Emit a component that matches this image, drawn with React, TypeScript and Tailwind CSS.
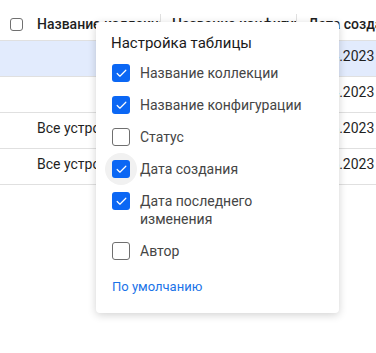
import { Check } from 'lucide-react'

type Row = {
  name: string
  config: string
  created: string
  selected?: boolean
}

const rows: Row[] = [
  { name: '', config: 'Основная', created: '12.04.2023 / 10:15', selected: true },
  { name: '', config: 'Тестовая', created: '18.04.2023 / 16:40' },
  { name: 'Все устройства', config: 'Основная', created: '21.05.2023 / 09:03' },
  { name: 'Все устройства', config: 'Резервная', created: '30.05.2023 / 11:27' },
]

const columns = [
  { label: 'Название коллекции', checked: true },
  { label: 'Название конфигурации', checked: true },
  { label: 'Статус', checked: false },
  { label: 'Дата создания', checked: true, hover: true },
  { label: 'Дата последнего изменения', checked: true },
  { label: 'Автор', checked: false },
]

function Box({ checked, hover }: { checked: boolean; hover?: boolean }) {
  return (
    <span className="relative flex h-[18px] w-[18px] shrink-0 items-center justify-center">
      {hover && <span className="absolute -left-[7px] -top-[7px] h-8 w-8 rounded-full bg-[#f1f1f1]" />}
      {checked ? (
        <span className="relative flex h-[18px] w-[18px] items-center justify-center rounded-[3px] bg-[#0b67f4]">
          <Check size={13} strokeWidth={2.2} className="text-white" />
        </span>
      ) : (
        <span className="relative h-[18px] w-[18px] rounded-[3px] border-[1.5px] border-[#6f6f6f] bg-white" />
      )}
    </span>
  )
}

export default function App() {
  return (
    <div className="relative h-[353px] w-[376px] overflow-hidden bg-white font-['Roboto',sans-serif] text-[14px] text-[#1f1f1f]">
      <div className="w-[520px]">
        <div className="flex h-[41px] items-center border-b border-[#e0e0e0] pt-[8px]">
          <div className="flex w-[160px] items-center overflow-hidden">
            <span className="ml-[10px] h-[13px] w-[13px] shrink-0 rounded-[3px] border border-[#707070]" />
            <span className="ml-[14px] whitespace-nowrap font-medium">Название коллекции</span>
          </div>
          <div className="h-[20px] w-px bg-[#e0e0e0]" />
          <div className="w-[135px] overflow-hidden whitespace-nowrap pl-[11px] font-medium">Название конфигурации</div>
          <div className="h-[20px] w-px bg-[#e0e0e0]" />
          <div className="whitespace-nowrap pl-[11px] font-medium">Дата создания</div>
        </div>
        {rows.map((r, i) => (
          <div
            key={i}
            className={`flex h-[36px] items-center border-b border-[#e0e0e0] pb-[4px] ${r.selected ? 'bg-[#e2ebfd]' : ''}`}
          >
            <div className="w-[160px] overflow-hidden whitespace-nowrap pl-[37px]">{r.name}</div>
            <div className="w-[136px] overflow-hidden whitespace-nowrap pl-[11px]">{r.config}</div>
            <div className="whitespace-nowrap pl-[8px]">{r.created}</div>
          </div>
        ))}
      </div>

      <div className="absolute left-[96px] top-[22px] w-[243px] rounded-[4px] bg-white pb-[18px] pl-[15px] pr-3 pt-[11px] shadow-[0_2px_8px_rgba(0,0,0,0.18)]">
        <div className="text-[15px] leading-[20px] text-[#1a1a1a]">Настройка таблицы</div>
        <div className="mt-1 flex flex-col">
          {columns.map((c) => (
            <div key={c.label} className="flex items-start gap-[10px] py-[7px] pl-px">
              <Box checked={c.checked} hover={c.hover} />
              <span className="w-[170px] text-[14px] leading-[18px] text-[#454545]">{c.label}</span>
            </div>
          ))}
        </div>
        <div className="mt-3 pl-px text-[13px] leading-[16px] text-[#1a73e8]">По умолчанию</div>
      </div>
    </div>
  )
}
